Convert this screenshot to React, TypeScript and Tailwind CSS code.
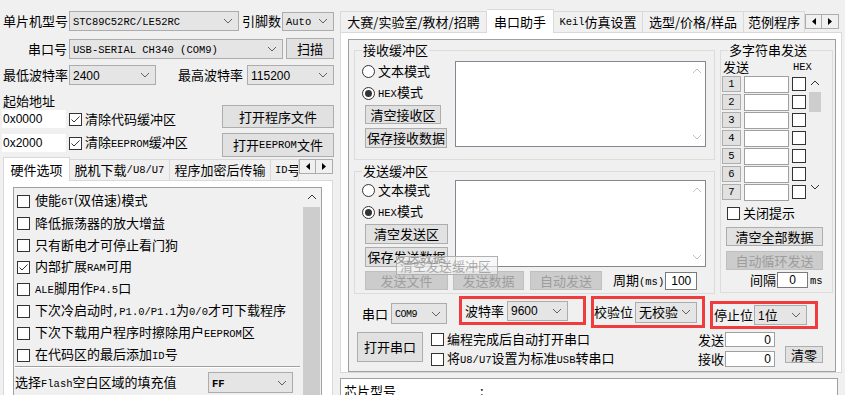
import React from 'react';

type P = { children?: React.ReactNode; className?: string };

const mono = "font-['Liberation_Mono',monospace] text-[10.5px]";
const sans = "font-['Liberation_Sans',sans-serif] text-[12px]";

const M = ({ children }: P) => <span className={mono}>{children}</span>;
const S = ({ children }: P) => <span className={sans}>{children}</span>;

const Chevron = ({ color = '#606060', up = false }: { color?: string; up?: boolean }) => (
  <svg width="10" height="6" viewBox="0 0 10 6">
    <polyline points={up ? '1,5 5,1 9,5' : '1,1 5,5 9,1'} fill="none" stroke={color} strokeWidth="1" />
  </svg>
);

const Sel = ({ children, className = '' }: P) => (
  <div className={`flex shrink-0 items-center justify-between border border-[#acacac] bg-[#e5e5e5] pl-[3px] pr-[5px] ${className}`}>
    <span className="whitespace-nowrap leading-[16px]">{children}</span>
    <Chevron />
  </div>
);

const Btn = ({ children, className = '' }: P) => (
  <div className={`flex shrink-0 items-center justify-center border border-[#adadad] bg-[#e1e1e1] whitespace-nowrap ${className}`}>
    {children}
  </div>
);

const DBtn = ({ children, className = '' }: P) => (
  <div className={`flex shrink-0 items-center justify-center border border-[#bfbfbf] bg-[#cccccc] text-[#9d9d9d] whitespace-nowrap ${className}`}>
    {children}
  </div>
);

const Inp = ({ children, className = '' }: P) => (
  <div className={`flex shrink-0 items-center bg-white whitespace-nowrap ${className}`}>{children}</div>
);

const Cb = ({ checked = false, className = '' }: { checked?: boolean; className?: string }) => (
  <span className={`inline-flex shrink-0 w-[13px] h-[13px] border border-[#333333] bg-white items-center justify-center ${className}`}>
    {checked && (
      <svg width="11" height="11" viewBox="0 0 11 11">
        <polyline points="1.5,5.5 4,8 9.5,2.5" fill="none" stroke="#333" strokeWidth="1" />
      </svg>
    )}
  </span>
);

const Radio = ({ checked = false }: { checked?: boolean }) => (
  <span className="flex shrink-0 w-[13px] h-[13px] rounded-full border border-[#333333] bg-white items-center justify-center">
    {checked && <span className="w-[7px] h-[7px] rounded-full bg-[#333333]" />}
  </span>
);

const TabArrows = ({ className = '' }: P) => (
  <div className={`flex shrink-0 ${className}`}>
    <div className="w-[17px] h-[15px] border border-[#adadad] bg-[#f0f0f0] flex items-center justify-center">
      <svg width="4" height="7" viewBox="0 0 4 7"><polygon points="4,0 0,3.5 4,7" fill="#000" /></svg>
    </div>
    <div className="w-[17px] h-[15px] border border-l-0 border-[#adadad] bg-[#f0f0f0] flex items-center justify-center">
      <svg width="4" height="7" viewBox="0 0 4 7"><polygon points="0,0 4,3.5 0,7" fill="#000" /></svg>
    </div>
  </div>
);

const Tab = ({ children, className = '', active = false }: P & { active?: boolean }) => (
  <div
    className={`flex shrink-0 items-center justify-center whitespace-nowrap overflow-hidden border border-b-0 border-[#d9d9d9] ${
      active ? 'bg-white h-[24px] relative z-10 -mb-px' : 'bg-[#f0f0f0] h-[21px]'
    } ${className}`}
  >
    {children}
  </div>
);

const TextArea = ({ className = '' }: P) => (
  <div className={`shrink-0 bg-white border border-[#828790] flex justify-end ${className}`}>
    <div className="w-[17px] flex flex-col justify-between items-center py-[6px]">
      <Chevron up color="#c2c2c2" />
      <Chevron color="#c2c2c2" />
    </div>
  </div>
);

const options: React.ReactNode[] = [
  <>使能<M>6T</M>(双倍速)模式</>,
  <>降低振荡器的放大增益</>,
  <>只有断电才可停止看门狗</>,
  <>内部扩展<M>RAM</M>可用</>,
  <><M>ALE</M>脚用作<M>P4.5</M>口</>,
  <>下次冷启动时<M>,P1.0/P1.1</M>为<M>0/0</M>才可下载程序</>,
  <>下次下载用户程序时擦除用户<M>EEPROM</M>区</>,
  <>在代码区的最后添加<M>ID</M>号</>,
];

function LeftPanel() {
  return (
    <div className="w-[340px] shrink-0 flex flex-col">
      <div className="w-[334px] flex flex-col">
        <div className="flex items-center mt-[11px] h-[20px]">
          <span className="ml-[3px] w-[66px] whitespace-nowrap">单片机型号</span>
          <Sel className="w-[170px] h-[20px]"><M>STC89C52RC/LE52RC</M></Sel>
          <span className="ml-[3px] w-[40px] whitespace-nowrap">引脚数</span>
          <Sel className="w-[52px] h-[19px]"><M>Auto</M></Sel>
        </div>
        <div className="flex items-center mt-[7px] h-[21px]">
          <span className="w-[67px] text-right whitespace-nowrap">串口号</span>
          <Sel className="ml-[2px] w-[214px] h-[20px]"><M>USB-SERIAL CH340 (COM9)</M></Sel>
          <Btn className="ml-[3px] w-[48px] h-[21px]">扫描</Btn>
        </div>
        <div className="flex items-center mt-[6px] h-[20px]">
          <span className="ml-[3px] w-[66px] whitespace-nowrap">最低波特率</span>
          <Sel className="w-[87px] h-[20px]"><S>2400</S></Sel>
          <span className="flex-1 text-right pr-[4px] whitespace-nowrap">最高波特率</span>
          <Sel className="w-[87px] h-[20px]"><S>115200</S></Sel>
        </div>
        <div className="flex mt-[8px]">
          <div className="flex flex-col w-[220px] ml-[2px]">
            <span className="ml-[1px] h-[15px] leading-[15px]">起始地址</span>
            <div className="flex items-center mt-[2px] h-[18px]">
              <Inp className="w-[64px] h-[18px] pl-[1px]"><S>0x0000</S></Inp>
              <Cb checked className="ml-[3px]" />
              <span className="ml-[3px] whitespace-nowrap">清除代码缓冲区</span>
            </div>
            <div className="flex items-center mt-[6px] h-[18px]">
              <Inp className="w-[64px] h-[18px] pl-[1px]"><S>0x2000</S></Inp>
              <Cb checked className="ml-[3px]" />
              <span className="ml-[3px] whitespace-nowrap">清除<M>EEPROM</M>缓冲区</span>
            </div>
          </div>
          <div className="flex flex-col">
            <Btn className="mt-[12px] w-[112px] h-[23px]">打开程序文件</Btn>
            <Btn className="mt-[5px] w-[112px] h-[24px]">打开<M>EEPROM</M>文件</Btn>
          </div>
        </div>
      </div>

      <div className="flex items-end h-[23px] ml-[3px] w-[330px]">
        <Tab active className="w-[67px]">硬件选项</Tab>
        <Tab className="w-[100px] border-l-0">脱机下载<M>/U8/U7</M></Tab>
        <Tab className="w-[101px] border-l-0">程序加密后传输</Tab>
        <Tab className="w-[28px] border-l-0 justify-start pl-[4px]"><M>ID</M>号</Tab>
        <TabArrows className="self-start mt-[2px]" />
      </div>
      <div className="ml-[3px] w-[330px] flex-1 bg-white border border-[#d9d9d9] pt-[6px] pl-[9px]">
        <div className="w-[309px] h-[240px] border border-[#a0a0a0] bg-[#f0f0f0] flex">
          <div className="w-[289px] flex flex-col pt-[2px]">
            {options.map((o, i) => (
              <div key={i} className="flex items-center h-[22px] pl-[3px]">
                <Cb checked={i === 3} />
                <span className="ml-[5px] whitespace-nowrap">{o}</span>
              </div>
            ))}
            <div className="ml-[1px] w-[285px] border-t border-[#a0a0a0] border-b border-b-white" />
            <div className="flex items-center mt-[4px] h-[21px] pl-[1px]">
              <span className="w-[193px] whitespace-nowrap">选择<M>Flash</M>空白区域的填充值</span>
              <Sel className="w-[85px] h-[21px]"><span className={`${mono} font-bold`}>FF</span></Sel>
            </div>
          </div>
          <div className="w-[17px] flex flex-col items-center">
            <div className="h-[17px] flex items-center"><Chevron up color="#333" /></div>
            <div className="mt-[2px] w-[17px] flex-1 bg-[#cdcdcd]" />
          </div>
        </div>
      </div>
    </div>
  );
}

function Group({ title, className = '', children }: P & { title: React.ReactNode }) {
  return (
    <div className={`relative shrink-0 border border-[#dcdcdc] ${className}`}>
      <div className="-mt-[8px] ml-[7px] w-fit px-[1px] bg-[#f0f0f0] leading-[14px] whitespace-nowrap">{title}</div>
      {children}
    </div>
  );
}

function RadioRow({ checked, children, className = '' }: P & { checked?: boolean }) {
  return (
    <div className={`flex items-center h-[14px] ${className}`}>
      <Radio checked={checked} />
      <span className="ml-[3px] whitespace-nowrap">{children}</span>
    </div>
  );
}

function RightPanel() {
  return (
    <div className="flex-1 flex flex-col">
      <div className="flex items-end h-[24px] mt-[9px]">
        <Tab className="w-[147px]">大赛/实验室/教材/招聘</Tab>
        <Tab active className="w-[67px] border-l-0">串口助手</Tab>
        <Tab className="w-[89px] border-l-0"><M>Keil</M>仿真设置</Tab>
        <Tab className="w-[101px] border-l-0">选型/价格/样品</Tab>
        <Tab className="w-[61px] border-l-0">范例程序</Tab>
        <TabArrows className="self-start mt-[5px]" />
      </div>
      <div className="w-[502px] h-[350px] bg-white border border-[#d9d9d9] pt-[6px] pl-[7px]">
        <div className="w-[488px] h-[333px] border border-[#a0a0a0] bg-[#f0f0f0] flex flex-col">
          <div className="flex mt-[10px]">
            <div className="ml-[5px] w-[361px] flex flex-col">
              <Group title="接收缓冲区" className="h-[110px]">
                <div className="flex mt-[4px]">
                  <div className="w-[100px] flex flex-col pl-[7px]">
                    <RadioRow className="mt-[3px]">文本模式</RadioRow>
                    <RadioRow checked className="mt-[8px]"><M>HEX</M>模式</RadioRow>
                    <Btn className="mt-[5px] ml-[3px] w-[76px] h-[19px]">清空接收区</Btn>
                    <Btn className="mt-[4px] ml-[3px] w-[82px] h-[20px]">保存接收数据</Btn>
                  </div>
                  <TextArea className="w-[251px] h-[86px]" />
                </div>
              </Group>
              <Group title="发送缓冲区" className="mt-[11px] h-[123px]">
                <div className="flex mt-[2px]">
                  <div className="w-[100px] flex flex-col pl-[7px]">
                    <RadioRow className="mt-[3px]">文本模式</RadioRow>
                    <RadioRow checked className="mt-[8px]"><M>HEX</M>模式</RadioRow>
                    <Btn className="mt-[5px] ml-[3px] w-[83px] h-[20px]">清空发送区</Btn>
                    <Btn className="mt-[3px] ml-[3px] w-[83px] h-[20px]">保存发送数据</Btn>
                  </div>
                  <TextArea className="w-[251px] h-[87px]" />
                </div>
                <div className="flex items-center mt-[4px] h-[19px] pl-[10px]">
                  <DBtn className="w-[83px] h-[19px]">发送文件</DBtn>
                  <DBtn className="ml-[5px] w-[71px] h-[19px]">发送数据</DBtn>
                  <DBtn className="ml-[6px] w-[72px] h-[19px]">自动发送</DBtn>
                  <span className="ml-[11px] whitespace-nowrap">周期<M>(ms)</M></span>
                  <Inp className="ml-[1px] w-[32px] h-[18px] border border-[#7a7a7a] justify-center"><S>100</S></Inp>
                </div>
                <div className="absolute left-[41px] top-[84px] w-[102px] h-[19px] border border-[#b0b0b0] bg-[#f4f4f4]/60 text-[#8a8a8a]/70 flex items-center pl-[3px] whitespace-nowrap">
                  清空发送缓冲区
                </div>
              </Group>
            </div>
            <Group title="多字符串发送" className="ml-[5px] w-[113px] h-[243px]">
              <div className="flex items-center mt-[3px] h-[14px]">
                <span className="ml-[2px] w-[70px]">发送</span>
                <M>HEX</M>
              </div>
              <div className="flex mt-[2px]">
                <div className="flex flex-col">
                  {[1, 2, 3, 4, 5, 6, 7].map((n) => (
                    <div key={n} className="flex items-start h-[18px]">
                      <Btn className="ml-[1px] w-[19px] h-[16px]"><M>{n}</M></Btn>
                      <Inp className="ml-[3px] w-[45px] h-[17px] border border-[#a0a0a0]" />
                      <Cb className="ml-[3px] mt-[1px] w-[14px] h-[14px]" />
                    </div>
                  ))}
                </div>
                <div className="ml-[3px] w-[12px] flex flex-col items-center">
                  <div className="h-[14px] flex items-center"><Chevron up color="#333" /></div>
                  <div className="mt-[2px] w-[12px] h-[20px] bg-[#cdcdcd]" />
                  <div className="flex-1" />
                  <div className="h-[14px] mb-[8px] flex items-center"><Chevron color="#333" /></div>
                </div>
              </div>
              <div className="flex items-center mt-[4px] h-[14px]">
                <Cb className="ml-[6px]" />
                <span className="ml-[3px]">关闭提示</span>
              </div>
              <Btn className="mt-[7px] ml-[5px] w-[97px] h-[19px]">清空全部数据</Btn>
              <DBtn className="mt-[5px] ml-[5px] w-[97px] h-[19px]">自动循环发送</DBtn>
              <div className="flex items-center mt-[2px] h-[16px]">
                <span className="ml-[29px]">间隔</span>
                <Inp className="ml-[1px] w-[31px] h-[16px] border border-[#7a7a7a] justify-center"><S>0</S></Inp>
                <span className="ml-[2px]"><M>ms</M></span>
              </div>
            </Group>
          </div>

          <div className="flex items-start mt-[2px] h-[34px]">
            <div className="flex items-center mt-[7px] h-[21px] ml-[13px]">
              <span className="w-[27px] whitespace-nowrap">串口</span>
              <Sel className="ml-[2px] w-[56px] h-[21px]"><span className="font-['Liberation_Mono',monospace] text-[10px] tracking-[-0.5px]">COM9</span></Sel>
            </div>
            <div className="ml-[12px] w-[127px] h-[29px] border-[3px] border-[#f03c3c] flex items-center">
              <span className="ml-[3px] w-[39px] whitespace-nowrap">波特率</span>
              <Sel className="ml-[3px] w-[61px] h-[20px]"><S>9600</S></Sel>
            </div>
            <div className="ml-[5px] w-[114px] h-[32px] border-[3px] border-[#f03c3c] flex items-center">
              <span className="w-[39px] whitespace-nowrap">校验位</span>
              <Sel className="ml-[2px] w-[62px] h-[21px]">无校验</Sel>
            </div>
            <div className="ml-[5px] mt-[5px] w-[108px] h-[28px] border-[3px] border-[#f03c3c] flex items-center">
              <span className="ml-[1px] w-[39px] whitespace-nowrap">停止位</span>
              <Sel className="ml-[1px] w-[53px] h-[20px]"><S>1</S>位</Sel>
            </div>
          </div>

          <div className="flex items-start">
            <Btn className="ml-[8px] mt-[2px] w-[66px] h-[30px]">打开串口</Btn>
            <div className="ml-[8px] mt-[2px] flex flex-col">
              <div className="flex items-center h-[14px]">
                <Cb />
                <span className="ml-[3px] whitespace-nowrap">编程完成后自动打开串口</span>
              </div>
              <div className="flex items-center mt-[6px] h-[14px]">
                <Cb />
                <span className="ml-[3px] whitespace-nowrap">将<M>U8/U7</M>设置为标准<M>USB</M>转串口</span>
              </div>
            </div>
            <div className="ml-auto flex flex-col">
              <div className="flex items-center mt-[2px] h-[15px]">
                <span className="w-[27px]">发送</span>
                <Inp className="w-[50px] h-[15px] border border-[#a0a0a0] justify-end pr-[3px]"><S>0</S></Inp>
              </div>
              <div className="flex items-center mt-[4px] h-[16px]">
                <span className="w-[27px]">接收</span>
                <Inp className="w-[50px] h-[16px] border border-[#a0a0a0] justify-end pr-[3px]"><S>0</S></Inp>
              </div>
            </div>
            <Btn className="ml-[10px] mr-[12px] mt-[16px] w-[38px] h-[17px]">清零</Btn>
          </div>
        </div>
      </div>
      <div className="mt-[5px] w-[498px] h-[20px] bg-white border border-[#a0a0a0] flex pl-[3px] pt-[5px] whitespace-nowrap">
        <span>芯片型号</span>
        <span className="ml-[84px]">:</span>
      </div>
    </div>
  );
}

export default function App() {
  return (
    <div className="w-[845px] h-[395px] overflow-hidden bg-[#f0f0f0] flex font-['Noto_Sans_CJK_SC','Liberation_Sans',sans-serif] text-[13px] leading-[14px] text-black select-none">
      <LeftPanel />
      <RightPanel />
    </div>
  );
}
